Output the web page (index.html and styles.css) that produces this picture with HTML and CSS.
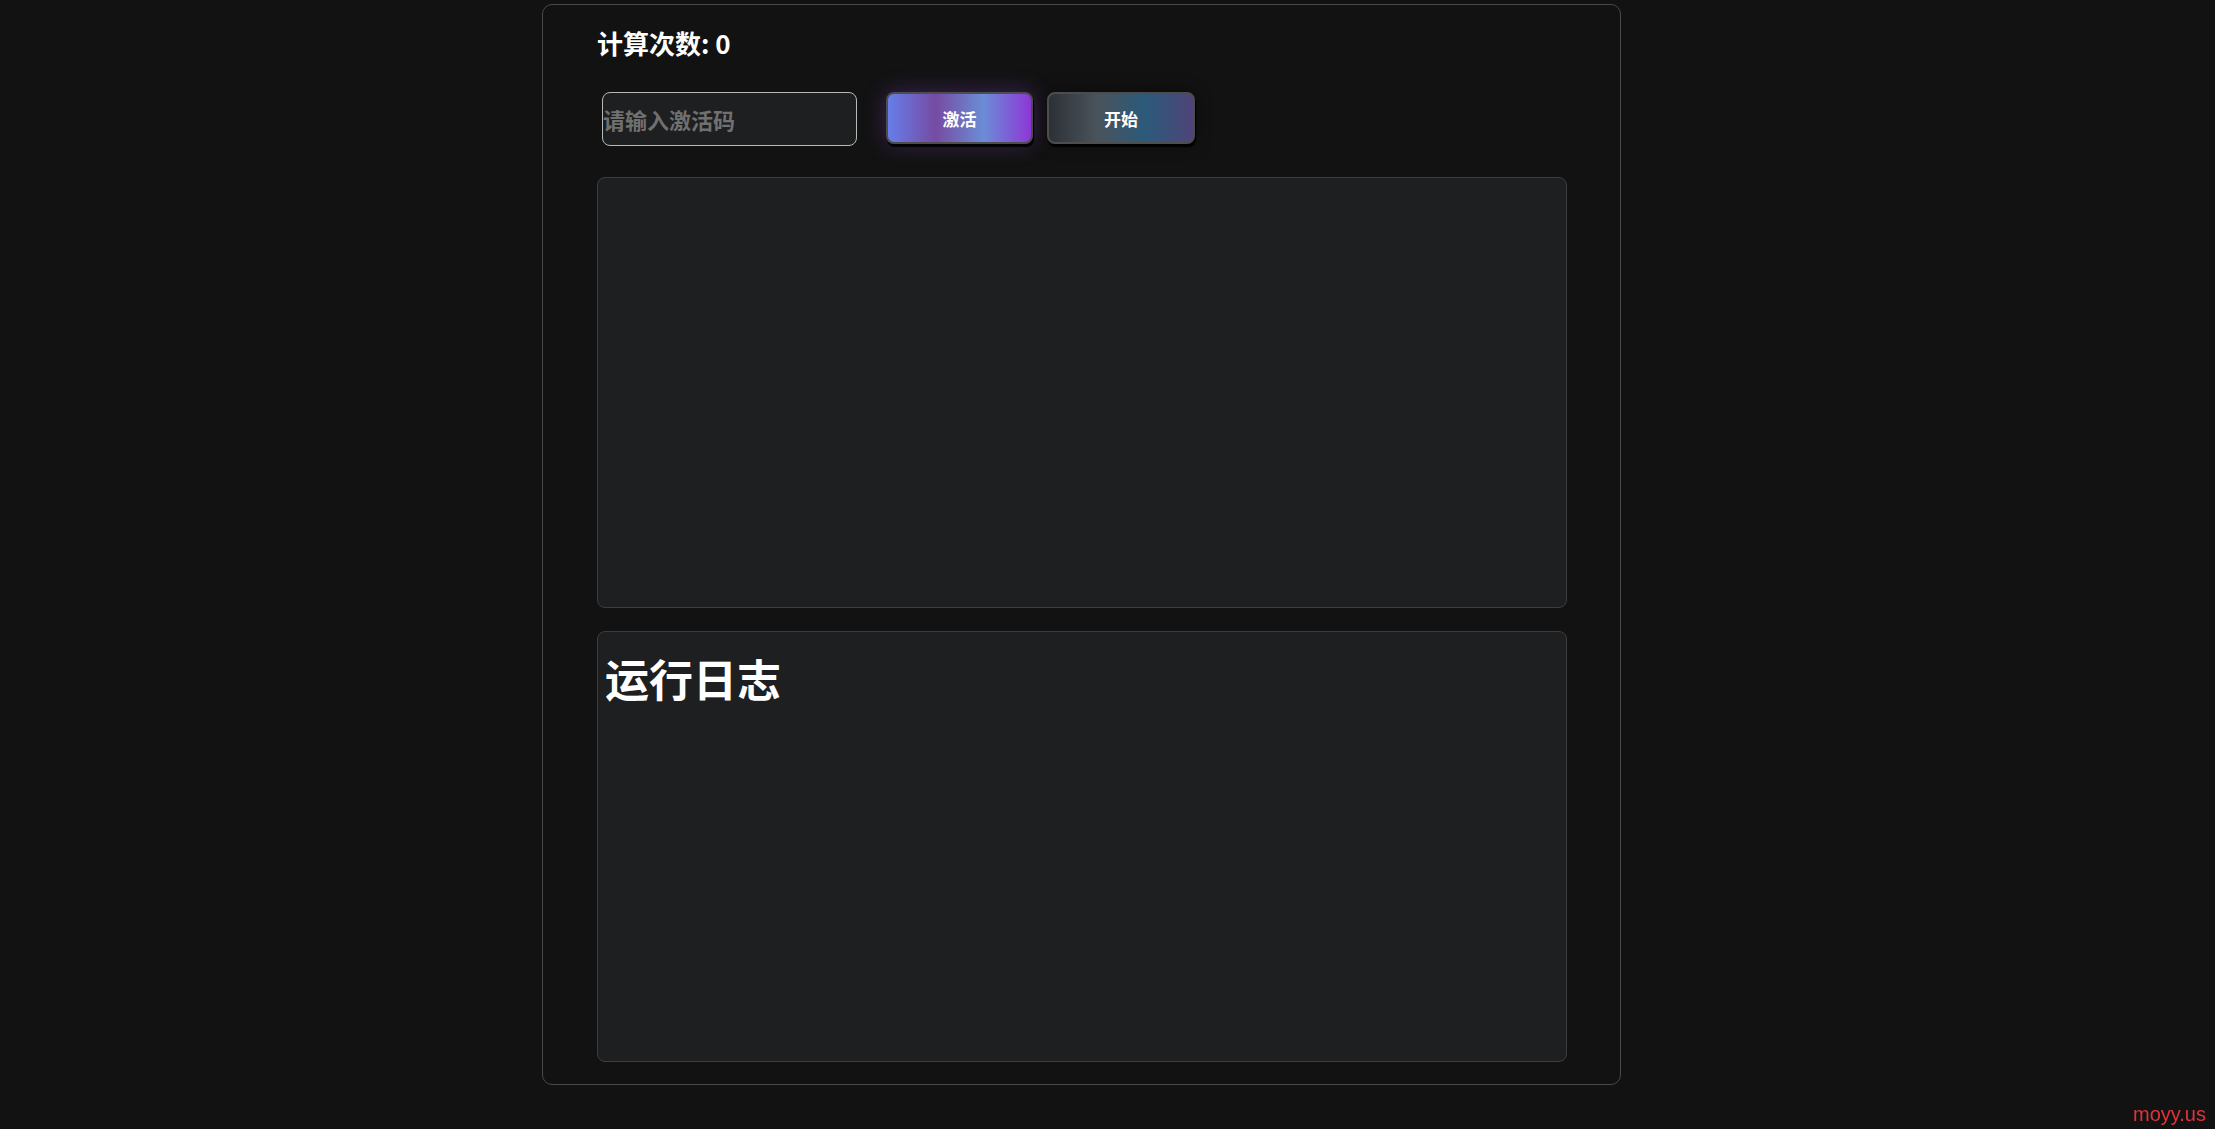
FILE: index.html
```html
<!DOCTYPE html>
<html lang="zh">
<head>
<meta charset="UTF-8">
<meta name="viewport" content="width=device-width, initial-scale=1.0">
<title>计算</title>
<link rel="stylesheet" href="styles.css">
</head>
<body>
<div class="app">
  <h2 class="count">计算次数: <span id="count">0</span></h2>
  <div class="controls">
    <input type="text" class="code-input" id="code" placeholder="请输入激活码">
    <button class="btn btn-activate">激活</button>
    <button class="btn btn-start">开始</button>
  </div>
  <div class="panel result" id="result"></div>
  <div class="panel log" id="log">
    <h1>运行日志</h1>
  </div>
</div>
<div class="watermark">moyy.us</div>
</body>
</html>
```

FILE: styles.css
```css
body {
  margin: 0;
  padding: 0;
  background-color: #121212;
  color: #fff;
  font-family: "Noto Sans CJK SC", "Noto Sans", sans-serif;
}

.app {
  width: 970px;
  margin: 4px 0 0 542px;
  padding: 22px 53px 22px 54px;
  border: 1px solid #4a4a4a;
  border-radius: 10px;
  background-color: #121212;
}

.count {
  margin: 0 0 34px 0;
  font-size: 26px;
  line-height: 1.2;
  font-weight: bold;
}

.controls {
  display: flex;
  align-items: center;
  gap: 14px;
  height: 54px;
}

.code-input {
  width: 255px;
  height: 54px;
  margin: 0 15px 0 5px;
  padding: 0;
  border: 1px solid #b8b8b8;
  border-radius: 8px;
  background-color: #1e1f21;
  color: #ddd;
  font-family: "Noto Sans CJK SC", sans-serif;
  font-size: 22px;
  font-weight: bold;
  box-sizing: border-box;
  outline: none;
}

.code-input::placeholder {
  color: #707070;
}

.btn {
  width: 147px;
  height: 52px;
  margin-bottom: 2px;
  border: 2px solid #4d4d4d;
  border-radius: 8px;
  color: #fff;
  font-family: "Noto Sans CJK SC", sans-serif;
  font-size: 17px;
  font-weight: bold;
  box-sizing: border-box;
  cursor: pointer;
}

.btn-activate {
  background: linear-gradient(90deg, #667eea, #764ba2, #6b8dd6, #8e37d7);
  box-shadow: 1px 3px 1px #000, 0 0 22px rgba(140, 70, 220, 0.35);
}

.btn-start {
  width: 148px;
  background: linear-gradient(90deg, #2c3136, #4a535b, #2b5a7a, #4f4479);
  box-shadow: 1px 3px 1px #000, 0 0 16px rgba(0, 0, 0, 0.5);
}

.panel {
  border: 1px solid #3c3d3e;
  border-radius: 8px;
  background-color: #1e1f21;
  box-sizing: border-box;
}

.result {
  height: 431px;
  margin-top: 31px;
}

.log {
  height: 431px;
  margin-top: 23px;
  padding: 20px 7px;
}

.log h1 {
  margin: 0;
  font-size: 44px;
  line-height: 1.2;
  font-weight: bold;
}

.watermark {
  position: fixed;
  right: 9px;
  bottom: 3px;
  color: #e0343c;
  font-family: "Liberation Sans", Arial, sans-serif;
  font-size: 20px;
}
```
